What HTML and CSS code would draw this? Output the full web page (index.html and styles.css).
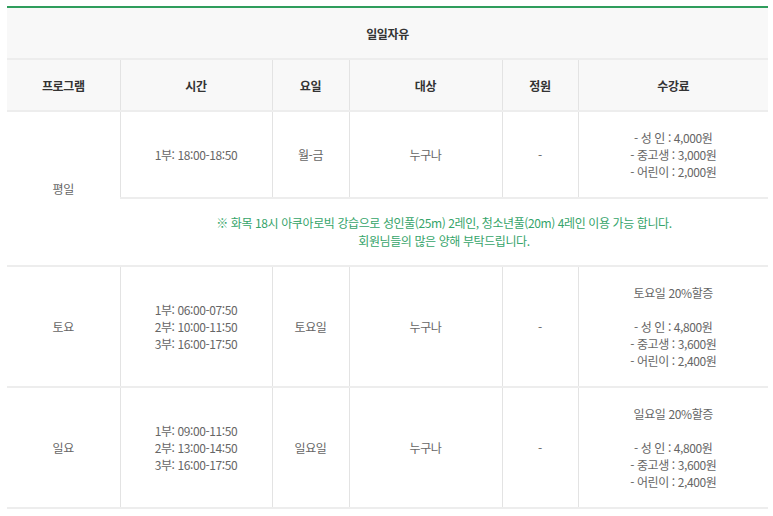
FILE: index.html
```html
<!DOCTYPE html>
<html lang="ko">
<head>
<meta charset="utf-8">
<link rel="stylesheet" href="styles.css">
</head>
<body>
<div class="wrap">
<table class="fee-table">
  <colgroup>
    <col class="c1"><col class="c2"><col class="c3"><col class="c4"><col class="c5"><col class="c6">
  </colgroup>
  <thead>
    <tr class="h-title"><th colspan="6">일일자유</th></tr>
    <tr class="h-cols">
      <th>프로그램</th><th>시간</th><th>요일</th><th>대상</th><th>정원</th><th>수강료</th>
    </tr>
  </thead>
  <tbody>
    <tr class="r-week">
      <td rowspan="2">평일</td>
      <td>1부: 18:00-18:50</td>
      <td>월-금</td>
      <td>누구나</td>
      <td>-</td>
      <td>- 성 인 : 4,000원<br>- 중고생 : 3,000원<br>- 어린이 : 2,000원</td>
    </tr>
    <tr class="r-note">
      <td colspan="5" class="note">※ 화목 18시 아쿠아로빅 강습으로 성인풀(25m) 2레인, 청소년풀(20m) 4레인 이용 가능 합니다.<br>회원님들의 많은 양해 부탁드립니다.</td>
    </tr>
    <tr class="r-end">
      <td>토요</td>
      <td>1부: 06:00-07:50<br>2부: 10:00-11:50<br>3부: 16:00-17:50</td>
      <td>토요일</td>
      <td>누구나</td>
      <td>-</td>
      <td>토요일 20%할증<br><br>- 성 인 : 4,800원<br>- 중고생 : 3,600원<br>- 어린이 : 2,400원</td>
    </tr>
    <tr class="r-end">
      <td>일요</td>
      <td>1부: 09:00-11:50<br>2부: 13:00-14:50<br>3부: 16:00-17:50</td>
      <td>일요일</td>
      <td>누구나</td>
      <td>-</td>
      <td>일요일 20%할증<br><br>- 성 인 : 4,800원<br>- 중고생 : 3,600원<br>- 어린이 : 2,400원</td>
    </tr>
  </tbody>
</table>
</div>
</body>
</html>
```
FILE: styles.css
```css
html, body {
  margin: 0;
  padding: 0;
  background: #fff;
}
.wrap {
  padding: 6px 5px 0 7px;
}
.fee-table {
  width: 761px;
  border-collapse: collapse;
  table-layout: fixed;
  border-top: 2px solid #2f9d5c;
  font-family: "Noto Sans CJK KR", "Noto Sans", sans-serif;
  font-size: 12px;
  line-height: 17px;
  color: #666;
  letter-spacing: -0.4px;
}
.c1 { width: 113px; }
.c2 { width: 152px; }
.c3 { width: 77px; }
.c4 { width: 153px; }
.c5 { width: 76px; }
.c6 { width: auto; }
.fee-table th,
.fee-table td {
  text-align: center;
  vertical-align: middle;
  padding: 0;
  border-bottom: 2px solid #ededed;
  border-left: 1px solid #e3e3e3;
}
.fee-table th:first-child,
.fee-table td:first-child {
  border-left: none;
}
.fee-table .note {
  border-left: 1px solid #e3e3e3;
}
.fee-table th {
  background: #f8f8f8;
  color: #333;
  font-weight: 700;
}
.h-title th { height: 50px; }
.h-cols th { height: 50px; }
.r-week td { height: 85px; }
.r-note td { height: 66px; }
.r-end td { height: 119px; }
.note {
  color: #35a46a;
  line-height: 18px;
}
```
